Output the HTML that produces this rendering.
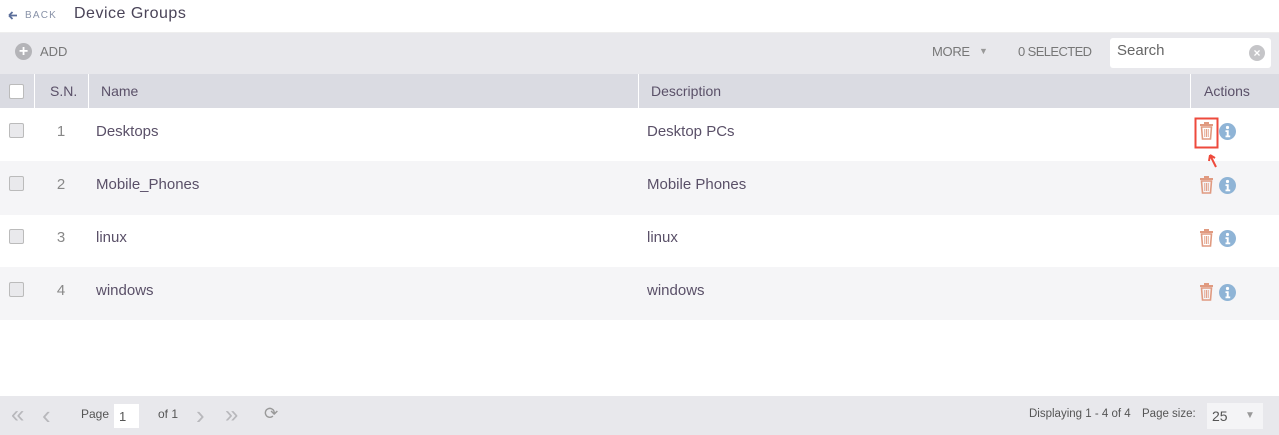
<!DOCTYPE html>
<html><head><style>
*{margin:0;padding:0;box-sizing:border-box}
body{width:1279px;height:435px;position:relative;background:#fff;font-family:"Liberation Sans",sans-serif;color:#5a5068;overflow:hidden}
.a{position:absolute;white-space:nowrap}
.cb{position:absolute;width:15px;height:15px;border:1px solid #bbb;background:#e9e9ec;border-radius:2px}
.row{position:absolute;left:0;width:1279px;height:53px}
.t{font-size:15px;color:#5a5068}
.sn{font-size:15px;color:#888;width:54px;text-align:center;left:34px}
</style></head><body>
<div class="a" style="left:0;top:0;width:1279px;height:33px;background:#fff;border-bottom:1px solid #eee"></div>
<svg class="a" style="left:8px;top:11px" width="10" height="9"><path d="M1 4.5h8M1 4.5l3.5-3.5M1 4.5l3.5 3.5" stroke="#5b6e9a" stroke-width="1.8" fill="none"/></svg>
<div class="a" style="left:25px;top:10px;font-size:10px;color:#8892a8;letter-spacing:1.2px">BACK</div>
<div class="a" style="left:74px;top:5px;font-size:16px;color:#4a4458;letter-spacing:0.5px">Device Groups</div>
<div class="a" style="left:0;top:33px;width:1279px;height:41px;background:#e8e8ec"></div>
<div class="a" style="left:15px;top:43px;width:17px;height:17px;border-radius:50%;background:#b4b4b8;color:#fff;font-size:16px;line-height:17px;text-align:center;font-weight:bold">+</div>
<div class="a" style="left:40px;top:44px;font-size:13px;color:#777">ADD</div>
<div class="a" style="left:932px;top:44px;font-size:13px;color:#777;letter-spacing:-0.3px">MORE</div>
<div class="a" style="left:979px;top:46px;font-size:9px;color:#999">▼</div>
<div class="a" style="left:1018px;top:44px;font-size:13px;color:#777;letter-spacing:-0.6px">0 SELECTED</div>
<div class="a" style="left:1110px;top:38px;width:161px;height:30px;background:#fff;border-radius:3px"></div>
<div class="a" style="left:1117px;top:42px;font-size:15px;color:#666">Search</div>
<div class="a" style="left:1249px;top:45px;width:16px;height:16px;border-radius:50%;background:#c5c5c8;color:#fff;font-size:12px;line-height:16px;text-align:center;font-weight:bold">×</div>
<div class="a" style="left:0;top:74px;width:1279px;height:34px;background:#dadbe2"></div>
<div class="a" style="left:34px;top:74px;width:1px;height:34px;background:#fff"></div>
<div class="a" style="left:88px;top:74px;width:1px;height:34px;background:#fff"></div>
<div class="a" style="left:638px;top:74px;width:1px;height:34px;background:#fff"></div>
<div class="a" style="left:1190px;top:74px;width:1px;height:34px;background:#fff"></div>
<div class="cb" style="left:9px;top:84px;background:#fff"></div>
<div class="a t" style="left:50px;top:83px;font-size:14px">S.N.</div>
<div class="a t" style="left:101px;top:83px;font-size:14px">Name</div>
<div class="a t" style="left:651px;top:83px;font-size:14px">Description</div>
<div class="a t" style="left:1204px;top:83px;font-size:14px">Actions</div>

<div class="row" style="top:108px;background:#fff"></div>
<div class="row" style="top:161px;background:#f5f5f7;height:54px"></div>
<div class="row" style="top:215px;background:#fff"></div>
<div class="row" style="top:267px;background:#f5f5f7"></div>

<div class="cb" style="left:9px;top:123px"></div><div class="a sn" style="top:123px">1</div><div class="a t" style="left:96px;top:123px">Desktops</div><div class="a t" style="left:647px;top:123px">Desktop PCs</div>
<div class="cb" style="left:9px;top:176px"></div><div class="a sn" style="top:176px">2</div><div class="a t" style="left:96px;top:176px">Mobile_Phones</div><div class="a t" style="left:647px;top:176px">Mobile Phones</div>
<div class="cb" style="left:9px;top:229px"></div><div class="a sn" style="top:229px">3</div><div class="a t" style="left:96px;top:229px">linux</div><div class="a t" style="left:647px;top:229px">linux</div>
<div class="cb" style="left:9px;top:282px"></div><div class="a sn" style="top:282px">4</div><div class="a t" style="left:96px;top:282px">windows</div><div class="a t" style="left:647px;top:282px">windows</div>

<svg class="a" style="left:0;top:0" width="1279" height="435">
<defs>
<g id="tr"><rect x="1" y="2" width="13" height="2" fill="#e09a80"/><rect x="5" y="0" width="5" height="2" fill="#e09a80"/><path d="M2.5 5h10l-1 12h-8z" fill="none" stroke="#e09a80" stroke-width="1.6"/><path d="M5.8 7v8M7.5 7v8M9.2 7v8" stroke="#e09a80" stroke-width="0.9"/></g>
<g id="inf"><circle cx="8.5" cy="8.5" r="8.5" fill="#8fb4d6"/><circle cx="8.5" cy="4.5" r="1.6" fill="#fff"/><path d="M6.5 7.3h3.2v5.2h1.5v1.7h-4.7v-1.7h1.2v-3.5h-1.2z" fill="#fff"/></g>
</defs>
<use href="#tr" x="1199" y="122"/><use href="#inf" x="1219" y="123"/>
<use href="#tr" x="1199" y="176"/><use href="#inf" x="1219" y="177"/>
<use href="#tr" x="1199" y="229"/><use href="#inf" x="1219" y="230"/>
<use href="#tr" x="1199" y="283"/><use href="#inf" x="1219" y="284"/>
<rect x="1195.5" y="118.5" width="22" height="29" fill="none" stroke="#ee4a3c" stroke-width="2"/>
<path d="M1216 167l-6-12M1210 155l-1 6M1210 155l5 3" stroke="#ee4a3c" stroke-width="2" fill="none"/>
</svg>

<div class="a" style="left:0;top:396px;width:1279px;height:39px;background:#e8e8ec"></div>
<div class="a" style="left:11px;top:401px;font-size:24px;color:#b8b8bc">«</div>
<div class="a" style="left:42px;top:400px;font-size:26px;color:#b8b8bc">‹</div>
<div class="a" style="left:81px;top:407px;font-size:12px;color:#555">Page</div>
<div class="a" style="left:114px;top:404px;width:25px;height:24px;background:#fff;font-size:13px;padding:5px 0 0 5px;color:#555">1</div>
<div class="a" style="left:158px;top:407px;font-size:12px;color:#555">of 1</div>
<div class="a" style="left:196px;top:400px;font-size:26px;color:#b8b8bc">›</div>
<div class="a" style="left:225px;top:401px;font-size:24px;color:#b8b8bc">»</div>
<div class="a" style="left:264px;top:404px;font-size:17px;color:#999">⟳</div>
<div class="a" style="left:1029px;top:408px;font-size:11.5px;color:#555">Displaying 1 - 4 of 4</div>
<div class="a" style="left:1142px;top:408px;font-size:11.5px;color:#555">Page size:</div>
<div class="a" style="left:1207px;top:403px;width:56px;height:26px;background:#f4f4f6;font-size:14px;padding:5px 0 0 5px;color:#555">25</div>
<div class="a" style="left:1245px;top:410px;font-size:10px;color:#999">▼</div>
</body></html>
